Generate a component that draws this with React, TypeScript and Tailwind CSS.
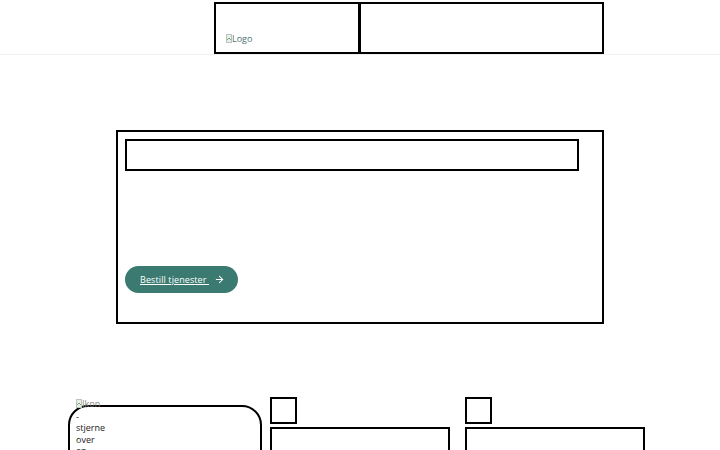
import { ArrowRight } from "lucide-react";

function BrokenImg({ alt, className = "" }: { alt: string; className?: string }) {
  // stands in for an image that failed to load: little icon + alt text
  return (
    <span className={`inline-flex items-start text-[9px] leading-[11px] ${className}`}>
      <svg width="6" height="9" viewBox="0 0 6 9" className="mt-[1px] shrink-0">
        <rect x="0.5" y="0.5" width="5" height="8" fill="#e8efe6" stroke="#b9c4bd" />
        <path d="M1 6 L3 4 L5 6" stroke="#7fa67a" fill="none" />
      </svg>
      <span>{alt}</span>
    </span>
  );
}

export default function App() {
  return (
    <div className="relative w-[720px] h-[450px] overflow-hidden bg-white font-['Open_Sans',sans-serif] text-black">
      {/* Header */}
      <header className="h-[55px] border-b border-[#f0f0f0] pt-[2px]">
        <div className="ml-[214px] flex h-[52px]">
          <div className="flex w-[146px] items-end border-2 border-black px-[10px] pb-[5px]">
            <a href="#" className="text-[9.5px] text-[#4c6f6b] underline">
              <BrokenImg alt="Logo" className="text-[9.5px]" />
            </a>
          </div>
          <div className="-ml-[1px] w-[245px] border-2 border-black" />
        </div>
      </header>

      {/* Hero */}
      <section className="ml-[116px] mt-[75px] flex h-[194px] w-[488px] flex-col border-2 border-black px-[7px] pt-[7px]">
        <div className="h-[32px] w-[454px] border-2 border-black" />
        <a
          href="#"
          className="mt-[95px] flex h-[27px] w-[113px] items-center rounded-full bg-[#3a7a71] pl-[15px] text-[9px] tracking-[0.1px] text-white"
        >
          <span className="underline">Bestill tjenester&nbsp;</span>
          <ArrowRight className="ml-[5px] h-[11px] w-[11px]" strokeWidth={2.2} />
        </a>
      </section>

      {/* Feature cards */}
      <section className="mt-[73px] flex items-start">
        <div className="relative ml-[68px] mt-[8px] h-[80px] w-[194px] rounded-t-[20px] border-2 border-black">
          <div className="absolute left-[6px] top-[-9px] w-[27px] text-[9px] leading-[11.5px] text-[#222]">
            <BrokenImg alt="Ikon" className="text-[#888]" />
            <div>-</div>
            <div>stjerne</div>
            <div>over</div>
            <div>en</div>
          </div>
        </div>
        <div className="ml-[8px] flex w-[180px] flex-col gap-[3px]">
          <div className="h-[27px] w-[27px] border-2 border-black" />
          <div className="h-[60px] border-2 border-black" />
        </div>
        <div className="ml-[15px] flex w-[180px] flex-col gap-[3px]">
          <div className="h-[27px] w-[27px] border-2 border-black" />
          <div className="h-[60px] border-2 border-black" />
        </div>
      </section>
    </div>
  );
}
